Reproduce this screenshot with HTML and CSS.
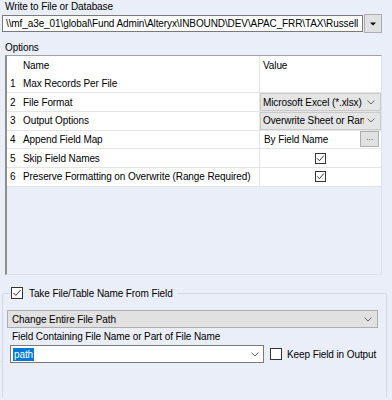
FILE: index.html
```html
<!DOCTYPE html>
<html>
  <head>
    <title>Output Data</title>
    <link rel="stylesheet" href="styles.css">
  </head>
  <body>
    <div class="panel">
      <p class="caption">Write to File or Database</p>
      <div class="path-row">
        <div class="path-input">\\mf_a3e_01\global\Fund Admin\Alteryx\INBOUND\DEV\APAC_FRR\TAX\Russell</div>
        <div class="drop-btn">
          <svg width="6" height="4" viewBox="0 0 6 4"><path d="M0 0.5 L6 0.5 L3 3.5 Z" fill="#000"/></svg>
        </div>
      </div>

      <p class="caption options-caption">Options</p>
      <div class="grid">
        <div class="row head">
          <span class="num"></span>
          <span class="name">Name</span>
          <span class="value">Value</span>
        </div>
        <div class="row">
          <span class="num">1</span>
          <span class="name">Max Records Per File</span>
          <span class="value"></span>
        </div>
        <div class="row">
          <span class="num">2</span>
          <span class="name">File Format</span>
          <span class="value">
            <span class="cell-combo">
              <span class="combo-text">Microsoft Excel (*.xlsx)</span>
              <svg class="chev" width="8" height="5" viewBox="0 0 8 5"><path d="M0.5 0.5 L4 4 L7.5 0.5" fill="none" stroke="#666"/></svg>
            </span>
          </span>
        </div>
        <div class="row">
          <span class="num">3</span>
          <span class="name">Output Options</span>
          <span class="value">
            <span class="cell-combo">
              <span class="combo-text">Overwrite Sheet or Range</span>
              <svg class="chev" width="8" height="5" viewBox="0 0 8 5"><path d="M0.5 0.5 L4 4 L7.5 0.5" fill="none" stroke="#666"/></svg>
            </span>
          </span>
        </div>
        <div class="row">
          <span class="num">4</span>
          <span class="name">Append Field Map</span>
          <span class="value value-map">
            <span class="map-text">By Field Name</span>
            <span class="dots-btn">...</span>
          </span>
        </div>
        <div class="row">
          <span class="num">5</span>
          <span class="name">Skip Field Names</span>
          <span class="value value-check">
            <svg width="11" height="11" viewBox="0 0 11 11"><rect x="0.5" y="0.5" width="10" height="10" fill="#fff" stroke="#333"/><path d="M2.2 5.4 L4.4 7.7 L8.8 2.6" fill="none" stroke="#333"/></svg>
          </span>
        </div>
        <div class="row">
          <span class="num">6</span>
          <span class="name">Preserve Formatting on Overwrite (Range Required)</span>
          <span class="value value-check">
            <svg width="11" height="11" viewBox="0 0 11 11"><rect x="0.5" y="0.5" width="10" height="10" fill="#fff" stroke="#333"/><path d="M2.2 5.4 L4.4 7.7 L8.8 2.6" fill="none" stroke="#333"/></svg>
          </span>
        </div>
      </div>

      <fieldset class="group">
        <legend class="group-title">
          <svg width="12" height="12" viewBox="0 0 12 12"><rect x="0.5" y="0.5" width="11" height="11" fill="#fff" stroke="#333"/><path d="M2.5 6 L4.8 8.4 L9.6 3" fill="none" stroke="#333"/></svg>
          <span>Take File/Table Name From Field</span>
        </legend>

        <div class="combo">
          <span class="combo-text">Change Entire File Path</span>
          <svg class="chev" width="8" height="5" viewBox="0 0 8 5"><path d="M0.5 0.5 L4 4 L7.5 0.5" fill="none" stroke="#666"/></svg>
        </div>

        <p class="field-label">Field Containing File Name or Part of File Name</p>
        <div class="field-row">
          <div class="field-input">
            <span class="selected">path</span>
            <svg class="chev" width="8" height="5" viewBox="0 0 8 5"><path d="M0.5 0.5 L4 4 L7.5 0.5" fill="none" stroke="#666"/></svg>
          </div>
          <svg class="keep-box" width="12" height="12" viewBox="0 0 12 12"><rect x="0.5" y="0.5" width="11" height="11" fill="#fff" stroke="#333"/></svg>
          <span class="keep-label">Keep Field in Output</span>
        </div>
      </fieldset>
    </div>
  </body>
</html>
```

FILE: styles.css
```css
body,
html {
  margin: 0;
  height: 100%;
}
body {
  background-color: #eaeef8;
  font-family: 'Liberation Sans', Arial, sans-serif;
  font-size: 10px;
  letter-spacing: -0.1px;
  color: #000;
  overflow: hidden;
}

p {
  margin: 0;
}

.panel {
  width: 392px;
}

.caption {
  height: 14px;
  line-height: 14px;
  padding-left: 5px;
}

.options-caption {
  padding-top: 8px;
}

/* path box */
.path-row {
  display: flex;
  align-items: center;
  height: 19px;
}

.path-input {
  box-sizing: border-box;
  margin-left: 2px;
  width: 361px;
  height: 17px;
  line-height: 15px;
  padding: 0 3px;
  border: 1px solid #7a7a7a;
  background-color: #fff;
  white-space: nowrap;
  overflow: hidden;
}

.drop-btn {
  box-sizing: border-box;
  margin-left: 1px;
  width: 18px;
  height: 19px;
  border: 1px solid #adadad;
  background-color: #e1e1e1;
  display: flex;
  justify-content: center;
  align-items: center;
}

/* options grid */
.grid {
  box-sizing: border-box;
  margin-left: 5px;
  width: 377px;
  height: 220px;
  border-top: 1px solid #a0a0a0;
  border-left: 2px solid #8f8f8f;
  border-right: 1px solid #dfe2ea;
  border-bottom: 1px solid #dfe2ea;
}

.row {
  box-sizing: border-box;
  display: flex;
  height: 18.67px;
  background-color: #fff;
  border-bottom: 1px solid #e4e4e4;
}

.row.head {
  border-bottom: none;
}

.num,
.name,
.value {
  display: flex;
  align-items: center;
  white-space: nowrap;
  overflow: hidden;
}

.num {
  width: 15px;
  padding-left: 3px;
  box-sizing: border-box;
}

.name {
  width: 237px;
  padding-left: 1px;
  box-sizing: border-box;
}

.value {
  width: 122px;
  box-sizing: border-box;
  border-left: 1px solid #e4e4e4;
  padding-left: 2px;
}

.head .value {
  padding-left: 3px;
}

.cell-combo {
  box-sizing: border-box;
  display: flex;
  align-items: center;
  margin-left: -2px;
  width: 121px;
  height: 17.67px;
  padding: 0 5px 0 2px;
  background-color: #e5e5e5;
  border: 1px solid #c9c9c9;
}

.combo-text {
  flex: 1;
  overflow: hidden;
  white-space: nowrap;
}

.chev {
  flex: none;
  margin-left: 3px;
}

.value-map {
  padding-left: 4px;
}

.map-text {
  flex: 1;
}

.dots-btn {
  box-sizing: border-box;
  width: 19px;
  height: 16px;
  margin-right: 2px;
  border: 1px solid #adadad;
  background-color: #e1e1e1;
  color: #555;
  font-size: 9px;
  text-align: center;
  line-height: 11px;
}

.value-check {
  justify-content: center;
  padding-left: 0;
}

/* group box */
.group {
  margin: 11px 5px 0 2px;
  padding: 0 0 34px 0;
  border: 1px solid #d5d9e2;
  border-bottom: none;
  border-radius: 2px 2px 0 0;
  min-width: 0;
}

.group-title {
  display: flex;
  align-items: center;
  margin-left: 7px;
  padding: 0 4px 0 1px;
  height: 14px;
}

.group-title span {
  margin-left: 6px;
}

.combo {
  box-sizing: border-box;
  display: flex;
  align-items: center;
  margin: 10px 8px 0 4px;
  height: 18px;
  padding: 0 5px 0 4px;
  background-color: #e1e1e1;
  border: 1px solid #adadad;
}

.field-label {
  margin: 2px 0 0 9px;
  height: 14px;
  line-height: 14px;
}

.field-row {
  display: flex;
  align-items: center;
  margin-top: 1px;
}

.field-input {
  box-sizing: border-box;
  display: flex;
  align-items: center;
  justify-content: space-between;
  margin-left: 7px;
  width: 254px;
  height: 18px;
  padding: 0 4px 0 2px;
  border: 1px solid #7a7a7a;
  background-color: #fff;
}

.selected {
  background-color: #0078d7;
  color: #fff;
  padding: 1px 1px;
  line-height: 11px;
}

.keep-box {
  margin-left: 6px;
}

.keep-label {
  margin-left: 5px;
}
```
